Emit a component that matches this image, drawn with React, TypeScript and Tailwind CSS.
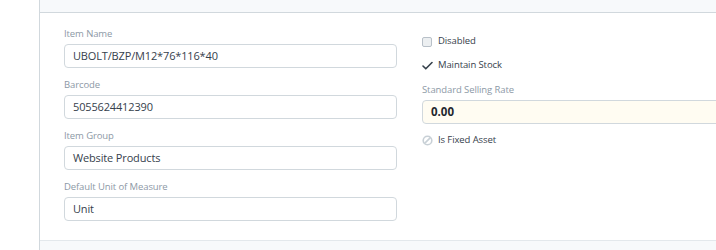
const font = { fontFamily: '"Open Sans", "Noto Sans", sans-serif' };

const Field = ({ label, value }: { label: string; value: string }) => (
  <div className="mb-[8px]">
    <div className="h-[17px] leading-[17px] text-[9.5px] tracking-[-0.1px] text-[#8d99a6] mb-[2px]">{label}</div>
    <div className="h-[24px] border border-[#d1d8dd] rounded-[4px] bg-white px-[8px] flex items-center text-[11px] tracking-[-0.15px] text-[#36414c]">
      {value}
    </div>
  </div>
);

export default function App() {
  return (
    <div className="w-[716px] h-[250px] overflow-hidden flex bg-white" style={font}>
      <div className="w-[39px] shrink-0" />
      <div className="flex-1 min-w-0 flex flex-col border-l border-[#d1d8dd]">
        {/* head strip */}
        <div className="h-[13px] shrink-0 bg-[#f7f9fb] border-b border-[#d1d8dd]" />

        {/* form section */}
        <div className="h-[227px] shrink-0 flex gap-[25px] pl-[24px] pt-[12px]">
          <div className="w-[333px] shrink-0">
            <Field label="Item Name" value="UBOLT/BZP/M12*76*116*40" />
            <Field label="Barcode" value="5055624412390" />
            <Field label="Item Group" value="Website Products" />
            <Field label="Default Unit of Measure" value="Unit" />
          </div>

          <div className="w-[333px] shrink-0 text-[9.5px] tracking-[-0.1px] text-[#36414c]">
            <div className="mt-[8px] h-[17px] flex items-center gap-[6px]">
              <span className="w-[10px] h-[10px] rounded-[2px] border border-[#b8c0c8] bg-[#eceff1]" />
              <span>Disabled</span>
            </div>
            <div className="mt-[7px] h-[17px] flex items-center gap-[5px]">
              <svg width="11" height="11" viewBox="0 0 11 11" fill="none" stroke="#36414c" strokeWidth="1.6" strokeLinecap="round" strokeLinejoin="round">
                <path d="M1 6l2.8 2.8L10 2.5" />
              </svg>
              <span>Maintain Stock</span>
            </div>
            <div className="mt-[7px] h-[17px] leading-[17px] text-[#8d99a6] mb-[2px]">
              Standard Selling Rate
            </div>
            <div className="h-[24px] border border-[#d1d8dd] rounded-[4px] bg-[#fffcf2] px-[8px] flex items-center text-[11.5px] tracking-normal font-bold text-[#1f272e]">
              0.00
            </div>
            <div className="mt-[8px] h-[17px] flex items-center gap-[5px]">
              <svg width="11" height="11" viewBox="0 0 11 11" fill="none" stroke="#c8d0d6" strokeWidth="1.6">
                <circle cx="5.5" cy="5.5" r="4.3" />
                <path d="M2.6 8.4L8.4 2.6" />
              </svg>
              <span>Is Fixed Asset</span>
            </div>
          </div>
        </div>

        {/* foot strip */}
        <div className="flex-1 bg-[#f7f9fb] border-t border-[#e3e8ec]" />
      </div>
    </div>
  );
}
